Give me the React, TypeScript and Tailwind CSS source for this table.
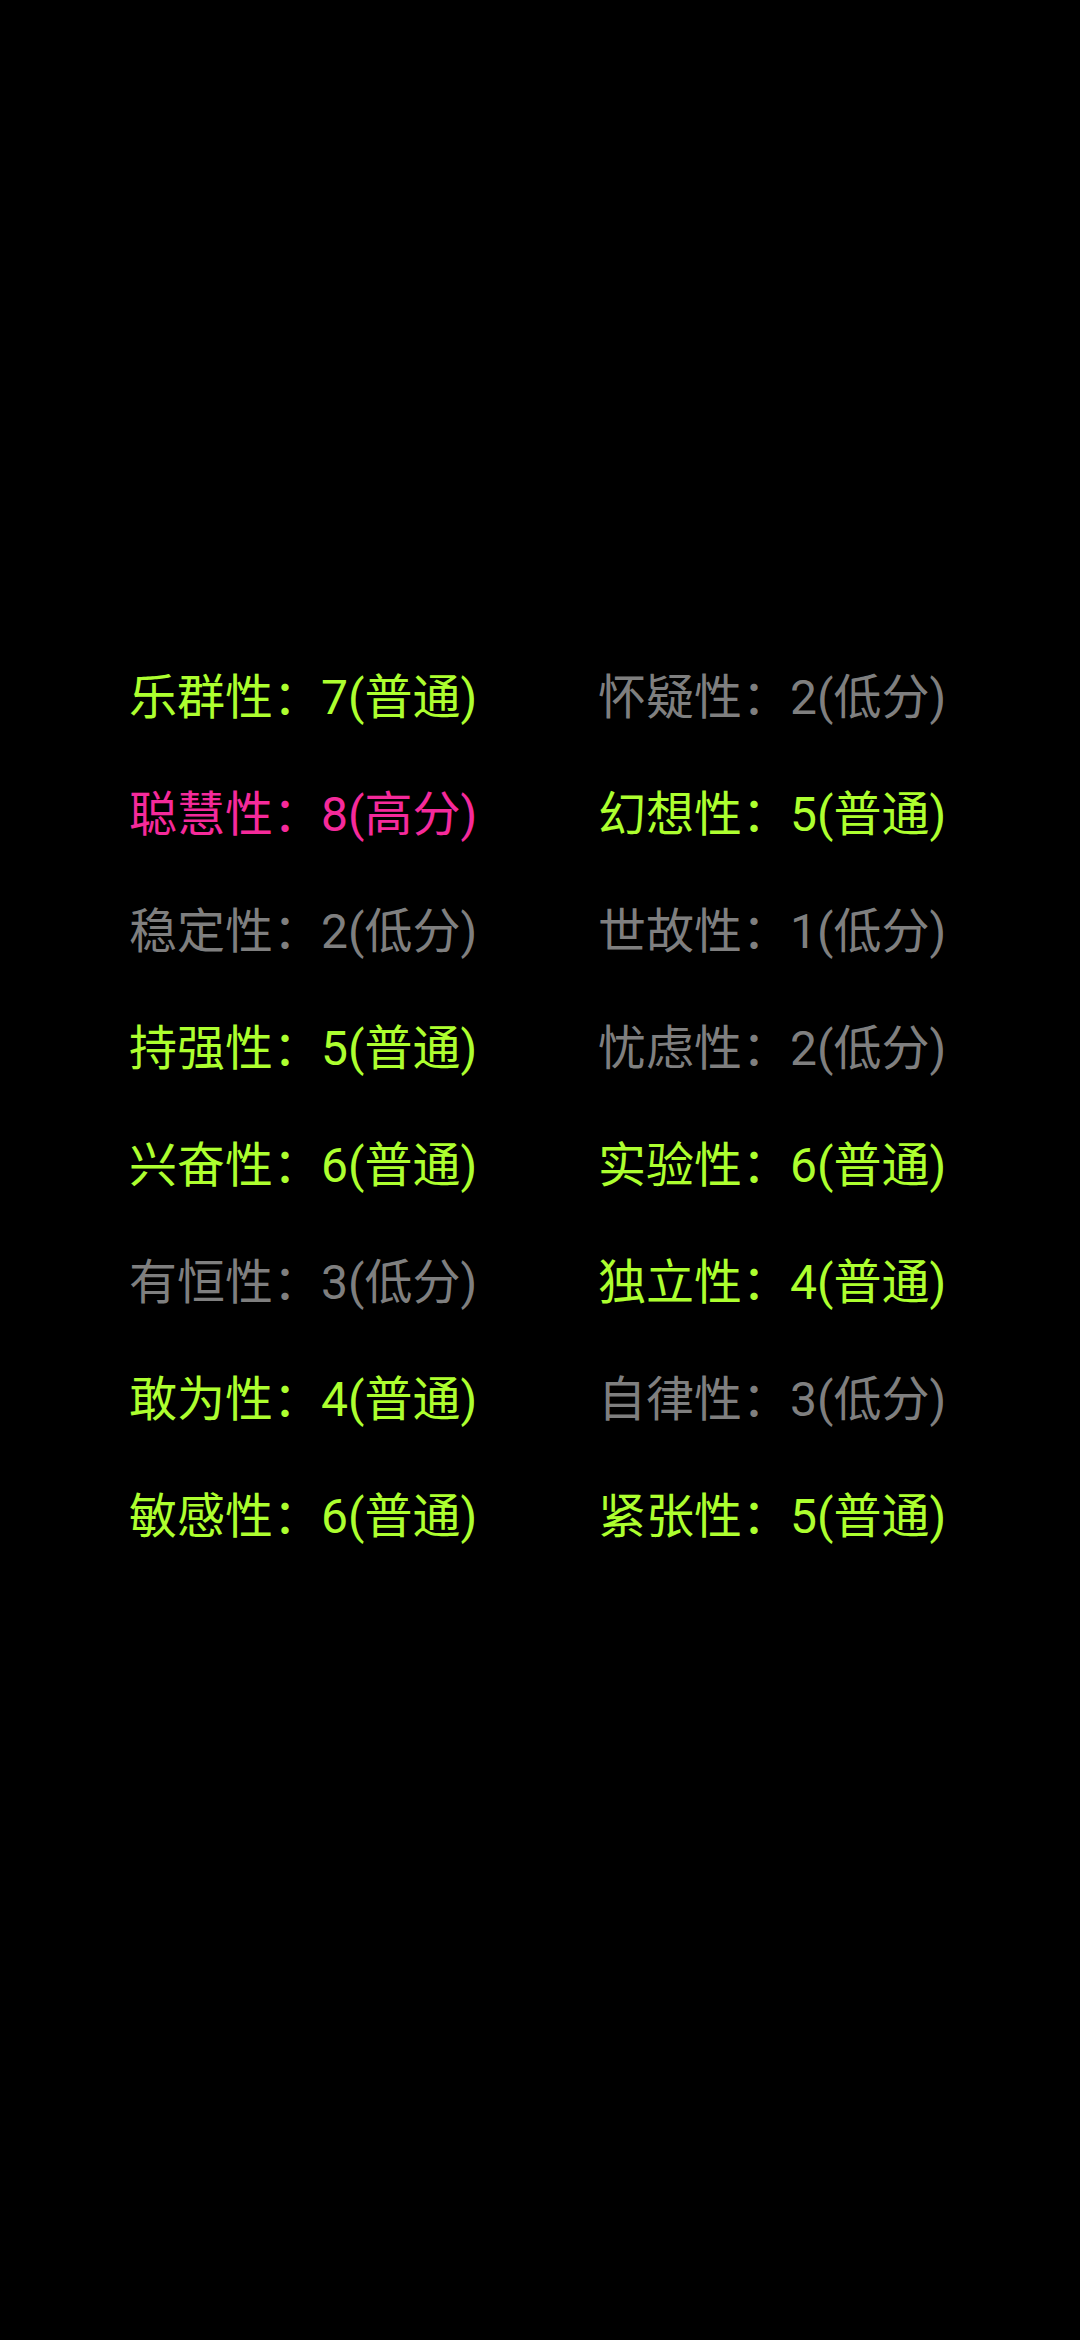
const GREEN = "text-[#adff2f]";
const PINK = "text-[#f52a9b]";
const GRAY = "text-[#7f7f7f]";

type Trait = { name: string; score: number; level: string };

const rows: [Trait, Trait][] = [
  [{ name: "乐群性", score: 7, level: "普通" }, { name: "怀疑性", score: 2, level: "低分" }],
  [{ name: "聪慧性", score: 8, level: "高分" }, { name: "幻想性", score: 5, level: "普通" }],
  [{ name: "稳定性", score: 2, level: "低分" }, { name: "世故性", score: 1, level: "低分" }],
  [{ name: "持强性", score: 5, level: "普通" }, { name: "忧虑性", score: 2, level: "低分" }],
  [{ name: "兴奋性", score: 6, level: "普通" }, { name: "实验性", score: 6, level: "普通" }],
  [{ name: "有恒性", score: 3, level: "低分" }, { name: "独立性", score: 4, level: "普通" }],
  [{ name: "敢为性", score: 4, level: "普通" }, { name: "自律性", score: 3, level: "低分" }],
  [{ name: "敏感性", score: 6, level: "普通" }, { name: "紧张性", score: 5, level: "普通" }],
];

const colorFor = (level: string) =>
  level === "高分" ? PINK : level === "低分" ? GRAY : GREEN;

const Cell = ({ t }: { t: Trait }) => (
  <div className={`h-[117px] flex items-center text-[48px] whitespace-nowrap ${colorFor(t.level)}`}>
    {t.name}：{t.score}({t.level})
  </div>
);

export default function App() {
  return (
    <div
      className="w-[1080px] h-[2340px] bg-black pt-[639px] pl-[129px]"
      style={{ fontFamily: 'Roboto, "Noto Sans CJK SC", sans-serif' }}
    >
      <div className="grid grid-cols-[469px_469px]">
        {rows.map(([a, b], i) => (
          <div key={i} className="contents">
            <Cell t={a} />
            <Cell t={b} />
          </div>
        ))}
      </div>
    </div>
  );
}
